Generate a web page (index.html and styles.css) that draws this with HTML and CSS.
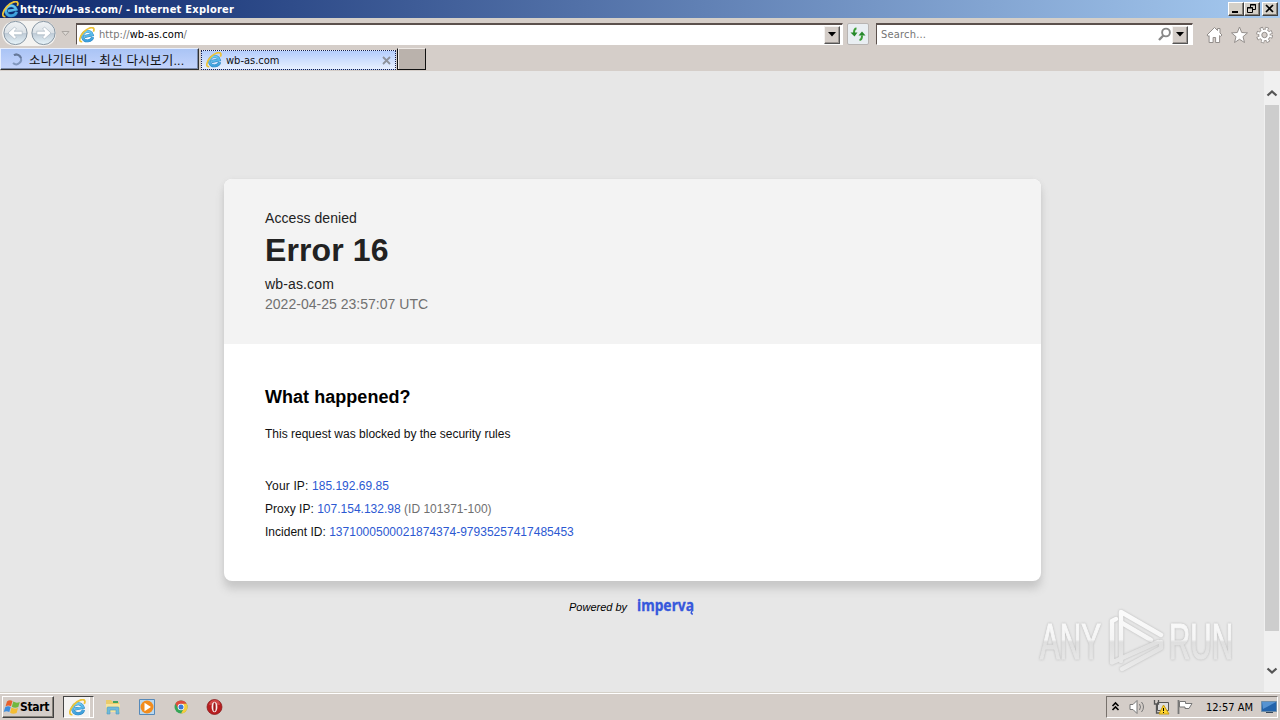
FILE: index.html
```html
<!DOCTYPE html>
<html lang="en">
<head>
<meta charset="utf-8">
<title>wb-as.com</title>
<link rel="stylesheet" href="styles.css">
</head>
<body>
<svg class="defs" width="0" height="0">
  <defs>
    <linearGradient id="blue" x1="0" y1="0" x2="0" y2="1"><stop offset="0" stop-color="#6ccbf3"/><stop offset="1" stop-color="#3c9edb"/></linearGradient>
    <linearGradient id="orb" x1="0" y1="0" x2="0" y2="1"><stop offset="0" stop-color="#f1f3f5"/><stop offset=".48" stop-color="#dce2e7"/><stop offset=".52" stop-color="#bfcbd6"/><stop offset="1" stop-color="#e8f5fb"/></linearGradient>
    <linearGradient id="wm" gradientUnits="userSpaceOnUse" x1="0" y1="612" x2="0" y2="672"><stop offset="0" stop-color="#fbfbfb"/><stop offset=".46" stop-color="#f5f5f5"/><stop offset=".5" stop-color="#dfdfdf"/><stop offset="1" stop-color="#ececec"/></linearGradient>
    <symbol id="ie" viewBox="0 0 16 16">
      <g transform="rotate(-12 8 9)" fill="none">
        <path d="M13.300 11.300C11.500 15 4.200 15.300 3.500 9.500 3 3.300 12.800 2.600 13.400 9H5.500" stroke="#2b83bd" stroke-width="2.900"/>
        <path d="M13.300 11.300C11.500 15 4.200 15.300 3.500 9.500 3 3.300 12.800 2.600 13.400 9H5.500" stroke="url(#blue)" stroke-width="2.100"/>
      </g>
      <path d="M3.200 14.700C-.8 15.200.5 9.600 4.600 5.200 8.500 1 13.600-.6 14.700 1.500 15.200 2.500 15 3.500 14.300 4.600" fill="none" stroke="#edc337" stroke-width="1.700"/>
    </symbol>
  </defs>
</svg>
<div class="screen">
  <header class="titlebar">
    <svg class="title-icon" width="17" height="17"><use href="#ie"/></svg>
    <span class="title-text">http://wb-as.com/ - Internet Explorer</span>
    <div class="window-buttons">
      <span class="win-btn"><svg width="14" height="12"><path d="M3 9h6" stroke="#000" stroke-width="2"/></svg></span>
      <span class="win-btn"><svg width="14" height="12"><path d="M5.500 4V1.500h5v5H8M5 2h6" fill="none" stroke="#000"/><path d="M2.500 4.500h5v5h-5zM2 5h6" fill="none" stroke="#000"/></svg></span>
      <span class="win-btn close"><svg width="14" height="12"><path d="M3 2l7 7M10 2L3 9" stroke="#000" stroke-width="1.700"/></svg></span>
    </div>
  </header>

  <nav class="toolbar">
    <svg class="history" width="76" height="28">
      <path d="M15 2H43Q55 3 56 15 55 27 43 27H15Q3 26 2 14 3 3 15 2" fill="#f4f3f1"/>
      <circle cx="15.500" cy="14" r="11.600" fill="url(#orb)" stroke="#8796a3"/>
      <circle cx="43.500" cy="14" r="11.600" fill="url(#orb)" stroke="#8796a3"/>
      <path d="M8 14l6.500-6 2 2-2.300 2.200h8v3.600h-8l2.300 2.200-2 2z" fill="#fff" stroke="#aab7c3" stroke-width=".7"/>
      <path d="M51 14l-6.500-6-2 2 2.300 2.200h-8v3.600h8l-2.300 2.200 2 2z" fill="#fff" stroke="#aab7c3" stroke-width=".7"/>
      <path d="M62 12.500h7l-3.500 4z" fill="#dedad6" stroke="#aaa5a1"/>
    </svg>
    <div class="field address">
      <svg width="16" height="16"><use href="#ie"/></svg>
      <span class="url"><span class="muted">http://</span>wb-as.com<span class="muted">/</span></span>
      <span class="drop"><svg width="9" height="5"><path d="M0 0h8L4 4.500z"/></svg></span>
    </div>
    <span class="refresh"><svg width="16" height="15"><path d="M6.500 1.500C4 1.500 4 3.500 4 6M9.500 13c2.500-.3 2.500-2 2.500-4.500" fill="none" stroke="#3a9d35" stroke-width="2"/><path d="M.5 5.500h7L4.500 9.500zM8.500 8.500h7L12 4.500z" fill="#26882b"/></svg></span>
    <div class="field search">
      <span class="placeholder">Search...</span>
      <svg class="lens" width="15" height="16"><circle cx="9" cy="5.500" r="3.900" fill="none" stroke="#888" stroke-width="1.900"/><path d="M6.300 8.500L2 13" stroke="#888" stroke-width="2.400"/></svg>
      <span class="drop"><svg width="9" height="5"><path d="M0 0h8L4 4.500z"/></svg></span>
    </div>
    <div class="commands">
      <svg width="17" height="18"><path d="M1 9L8.500 1.500 11.500 4.500V2.500h2.500v4.500l2 2-1.400 1.400-1-.8V16.500h-4v-5h-2.500v5h-4V9.600l-1 .8z" fill="#fff" stroke="#938e8b"/></svg>
      <svg width="17" height="18"><path d="M8.500 1l2.200 5.500 5.800.4-4.500 3.800 1.500 5.800-5-3.200-5 3.200L5 10.700.5 6.900l5.800-.4z" fill="#fff" stroke="#938e8b"/></svg>
      <svg width="17" height="18"><circle cx="8.500" cy="9" r="6.500" fill="none" stroke="#938e8b" stroke-width="3.800" stroke-dasharray="3 2.105"/><circle cx="8.500" cy="9" r="5.800" fill="#fff" stroke="#938e8b"/><circle cx="8.500" cy="9" r="6.200" fill="none" stroke="#fff" stroke-width="2.600" stroke-dasharray="1.900 2.970" stroke-dashoffset="-.5"/><circle cx="8.500" cy="9" r="2.700" fill="#d5cec9" stroke="#938e8b"/></svg>
    </div>
  </nav>

  <div class="tabs">
    <div class="tab inactive">
      <svg width="13" height="13"><path d="M4 2.200A4.800 4.800 0 1 1 3 10" fill="none" stroke="#8096bd" stroke-width="2"/><path d="M4 2.200A4.800 4.800 0 0 1 11 5" fill="none" stroke="#667899" stroke-width="2"/></svg>
      <span class="korean">소나기티비 - 최신 다시보기...</span>
    </div>
    <div class="tab active">
      <svg width="16" height="16"><use href="#ie"/></svg>
      <span class="tab-name">wb-as.com</span>
      <svg class="tab-close" width="9" height="9"><path d="M1 1l7 7M8 1L1 8" stroke="#8d929c" stroke-width="1.800"/></svg>
    </div>
    <div class="new-tab"></div>
  </div>

  <main class="viewport">
    <div class="page">
      <section class="card">
        <div class="card-head">
          <p class="denied">Access denied</p>
          <h1>Error 16</h1>
          <p class="domain">wb-as.com</p>
          <p class="time">2022-04-25 23:57:07 UTC</p>
        </div>
        <div class="card-body">
          <h2>What happened?</h2>
          <p class="reason">This request was blocked by the security rules</p>
          <p class="row"><span class="your-ip">Your IP: </span><span class="value">185.192.69.85</span></p>
          <p class="row">Proxy IP: <span class="value">107.154.132.98</span> <span class="id">(ID 101371-100)</span></p>
          <p class="row">Incident ID: <span class="value">1371000500021874374-97935257417485453</span></p>
        </div>
      </section>
      <footer class="powered"><em>Powered by</em>
        <svg width="60" height="20"><text x="0" y="13" textLength="57" lengthAdjust="spacingAndGlyphs" class="brand">imperva</text><path d="M55 13q-2 3 1 3" fill="none" stroke="#3658dc" stroke-width="1.500"/></svg>
      </footer>
      <svg class="watermark" width="210" height="74" viewBox="1030 603 210 74">
        <g fill="url(#wm)" stroke="url(#wm)" stroke-width="1.200" class="wm-text">
          <text x="1040" y="659" textLength="61" lengthAdjust="spacingAndGlyphs">ANY</text>
          <text x="1169" y="659" textLength="64" lengthAdjust="spacingAndGlyphs">RUN</text>
        </g>
        <g fill="none" stroke="url(#wm)" stroke-width="4.500" stroke-linecap="round" stroke-linejoin="round" class="wm-mark">
          <path d="M1116 619L1112 621V662.500L1158 642"/>
          <path d="M1121 661V612L1161 635"/>
          <path d="M1122 623L1151 640"/>
          <path d="M1122 669L1161 648V642"/>
        </g>
      </svg>
    </div>
    <aside class="scrollbar">
      <svg width="16" height="12"><path d="M3.500 8.500L8 4.500l4.500 4" fill="none" stroke="#555" stroke-width="2.300"/></svg>
      <div class="thumb"></div>
      <svg class="down" width="16" height="12"><path d="M3.500 3.500L8 7.500l4.500-4" fill="none" stroke="#555" stroke-width="2.300"/></svg>
    </aside>
  </main>

  <footer class="taskbar">
    <div class="start"><svg width="17" height="16"><path d="M3 2.500q2.500-2 5.500-.5L7 7.200q-3-1.500-5.500.3z" fill="#e8602c"/><path d="M9.300 2.500q3 2 6.500.5L14.300 8q-3.500 1.500-6.500-.3z" fill="#72b83f"/><path d="M1.200 8.300q2.500-2 5.500-.4L5.300 13Q2.500 11.300-.3 13z" fill="#3d8dde"/><path d="M7.500 8.600q3 2 6.500.4L12.600 14q-3.500 1.700-6.500-.2z" fill="#f4bd34"/></svg><span>Start</span></div>
    <div class="task pressed"><svg width="17" height="17"><use href="#ie"/></svg></div>
    <div class="launchers">
      <svg width="18" height="18"><path d="M2 5V2h5l2 2h6v9H2z" fill="#eacb6b"/><path d="M2 6h14v8H2z" fill="#f6e49d"/><path d="M3 16v-6q0-1 1-1h10q1 0 1 1v6h-3v-4H6v4z" fill="#70b9da" stroke="#4e9cc0" stroke-width=".6"/><path d="M9 4h5" stroke="#42a35e" stroke-width="2"/></svg>
      <svg width="18" height="18"><path d="M1.500 1.500h15v15h-15z" fill="#b9d8f0" stroke="#5689b9"/><circle cx="9" cy="9" r="6.500" fill="#f28c1d"/><path d="M6.500 4.700v8.600L13 9z" fill="#fff"/></svg>
      <svg width="18" height="18" viewBox="0 0 18 18"><circle cx="9" cy="9" r="6.500" fill="#35a557"/><path d="M3.370 5.750A6.500 6.500 0 0 1 14.630 5.750L9 6.500 6.300 10.500z" fill="#de4b3c"/><path d="M14.630 5.750A6.500 6.500 0 0 1 9 15.500L11.800 10.500 10 5.750z" fill="#f6cc3e"/><circle cx="9" cy="9" r="3.300" fill="#fff"/><circle cx="9" cy="9" r="2.500" fill="#3979d7"/></svg>
      <svg width="18" height="18"><circle cx="8.500" cy="9" r="7.500" fill="#b81e20" stroke="#831416" stroke-width=".7"/><path d="M3 7q1-5 6-5t5 5" fill="#df6464" opacity=".6"/><ellipse cx="8.500" cy="9" rx="2.900" ry="5.300" fill="#f9eeee"/><ellipse cx="8.500" cy="9" rx="1.200" ry="4.500" fill="#9e1719"/></svg>
    </div>
    <div class="tray">
      <svg class="chevrons" width="9" height="12"><path d="M1.500 5L4.500 2l3 3M1.500 9l3-3 3 3" fill="none" stroke="#000" stroke-width="1.600"/></svg>
      <svg class="speaker" width="17" height="16"><path d="M1 5.500h3L8 1.500v13L4 10.500H1z" fill="#fff" stroke="#777"/><path d="M10.500 5q2 3 0 6M12.500 3q4 5 0 10" fill="none" stroke="#777"/></svg>
      <svg class="network" width="17" height="16"><path d="M4.500 3.500h11v8h-11z" fill="#ddd" stroke="#555"/><path d="M1.500 1v4h4V1M3.500 5v9h5" fill="none" stroke="#555" stroke-width="1.300"/><path d="M10.500 6l5.500 9H6z" fill="#ffd52e" stroke="#c69b10"/><path d="M10.500 9v3m0 1v1" stroke="#000"/></svg>
      <svg class="flag" width="17" height="16"><path d="M1.500 1v14" stroke="#777" stroke-width="1.800"/><path d="M2.500 2.500h6v2h6.500l-3 5H8V8H2.500z" fill="#fff" stroke="#777"/></svg>
      <span class="clock">12:57 AM</span>
      <svg class="desktop" width="16" height="14"><path d="M.5 1.500h15v10H.5z" fill="#2464ab" stroke="#6f8ea9"/><path d="M1 2h14L2 9z" fill="#5794d2"/><path d="M5 12.500h7" stroke="#34475b"/></svg>
    </div>
  </footer>
</div>
</body>
</html>
```

FILE: styles.css
```css
* { box-sizing: border-box; }
body { margin: 0; overflow: hidden; background: #d5cec9; }
p, h1, h2 { margin: 0; }
svg { display: block; flex: none; overflow: visible; }
.defs { position: absolute; }
.screen { width: 1280px; height: 720px; display: flex; flex-direction: column; font: 11px "DejaVu Sans Condensed", "DejaVu Sans", sans-serif; white-space: nowrap; }

.titlebar { height: 18px; flex: none; display: flex; align-items: center; padding: 0 2px; background: linear-gradient(90deg, #0c276c, #a6caf0); color: #fff; }
.title-icon { margin-right: 1px; }
.title-text { font-weight: bold; font-size: 11px; letter-spacing: .25px; }
.window-buttons { margin-left: auto; display: flex; }
.win-btn { width: 16px; height: 14px; background: #d4d0c8; border: 1px solid; border-color: #fff #404040 #404040 #fff; box-shadow: inset -1px -1px #858179; }
.close { margin-left: 2px; }

.toolbar { height: 30px; flex: none; display: flex; align-items: flex-start; padding-top: 4px; background: #d5cec9; border-top: 1px solid #d4d0c8; }
.history { margin-top: -4px; }
.field { height: 22px; background: #fff; border: 1px solid; border-color: #5c514d #fff #fff #5c514d; border-top-width: 2px; display: flex; align-items: center; }
.address { width: 767px; padding: 0 2px; }
.url { margin-left: 4px; font-size: 11px; letter-spacing: .05px; }
.muted { color: #777; }
.drop { width: 16px; height: 18px; margin-left: auto; background: #d4cdc8; border: 1px solid; border-color: #f4f2f0 #555 #555 #f4f2f0; box-shadow: inset -1px -1px #9c9692; display: flex; align-items: center; justify-content: center; }
.drop svg { margin-left: 1px; }
.refresh { margin-left: 4px; width: 22px; height: 22px; border: 1px solid #b8b4b2; border-radius: 2px; background: #e9eef2; display: flex; align-items: center; justify-content: center; }
.search { margin-left: 7px; width: 317px; padding: 0 4px; }
.placeholder { color: #757575; font-size: 11px; letter-spacing: .2px; }
.lens { margin-left: auto; }
.search .drop { margin-left: 0; }
.commands { display: flex; gap: 8px; margin: 3px 0 0 13px; }

.tabs { height: 23px; flex: none; display: flex; background: #d5cec9; }
.tab { height: 22px; display: flex; align-items: center; color: #111; }
.inactive { width: 199px; padding-left: 9px; background: linear-gradient(#aac4f5, #c4d4fc); border: 1px solid; border-color: #e7effe #303030 #303030 #e7effe; box-shadow: inset -1px -1px #7989aa; }
.korean { margin-left: 6px; font: 12.500px "Liberation Sans", "Noto Sans CJK KR", sans-serif; letter-spacing: .22px; }
.active { margin: 2px 0 0 2px; width: 195px; height: 20px; padding: 0 4px; background: linear-gradient(#b4cdfc, #e7effe); border: 1px dotted #17204a; }
.tab-name { margin-left: 4px; font-size: 11px; }
.tab-close { margin-left: auto; }
.new-tab { margin-left: 1px; width: 29px; height: 22px; background: #bab2ac; border: 1px solid; border-color: #eee9e5 #111 #111 #111; box-shadow: inset 1px 0 #eee9e5; }

.viewport { height: 621px; flex: none; display: flex; background: #e7e7e7; font-family: "Liberation Sans", sans-serif; }
.page { width: 1264px; position: relative; display: flex; flex-direction: column; padding: 108px 223px 0 224px; }
.card { height: 402px; border-radius: 8px; overflow: hidden; background: #fff; box-shadow: 0 8px 8px #c8c8c8, 0 1px 5px #d8d8d8; }
.card-head { height: 165px; background: #f3f3f3; padding: 29px 41px 0; color: #222; font-size: 14px; }
.denied, .domain, .time { line-height: 20px; }
.denied { letter-spacing: .07px; }
.domain { margin-top: 5px; letter-spacing: .14px; }
.time { color: #707070; letter-spacing: .02px; }
h1 { font-size: 32px; line-height: 38px; margin-top: 3px; letter-spacing: .1px; }
.card-body { padding: 41px 41px 0; color: #111; font-size: 12px; }
h2 { color: #000; font-size: 18px; line-height: 25px; letter-spacing: .04px; }
.reason { line-height: 20px; margin: 14px 0 31px; }
.row { line-height: 23px; letter-spacing: .01px; }
.your-ip { letter-spacing: .16px; }
.value { color: #2c59d2; }
.id { color: #707070; }
.powered { display: flex; margin: 14px 0 0 345px; }
.powered em { width: 68px; line-height: 24px; font-size: 11px; color: #000; }
.powered svg { margin-top: 3px; }
.brand { font: bold 16px "Noto Sans", sans-serif; fill: #3658dc; stroke: #3658dc; stroke-width: .3px; }
.watermark { position: absolute; left: 1030px; top: 532px; }
.wm-text { font: 50px "Liberation Sans Narrow", "Liberation Sans", sans-serif; filter: drop-shadow(0 0 1px #b5b5b5); }
.wm-mark { filter: drop-shadow(0 0 1px #b5b5b5); }
.scrollbar { width: 16px; background: #f0f0f0; padding-top: 16px; }
.thumb { margin: 6px 1px 0; height: 526px; background: #cdcdcd; }
.down { margin-top: 34px; }

.taskbar { height: 28px; flex: none; display: flex; align-items: flex-start; padding: 3px 2px 0; background: #d4cdc8; border-top: 1px solid #d4d0c8; box-shadow: inset 0 1px #fff; }
.start { width: 52px; height: 22px; display: flex; align-items: center; padding-left: 1px; border: 1px solid; border-color: #fff #404040 #404040 #fff; box-shadow: inset -1px -1px #858179; color: #000; font-weight: bold; font-size: 12px; }
.start span { letter-spacing: -.3px; margin-left: -1px; }
.task { margin-left: 9px; width: 31px; height: 22px; display: flex; align-items: center; padding-left: 5px; background: #f4f3f2; border: 1px solid; border-color: #444 #fff #fff #444; box-shadow: inset -3px 0 #d4cdc8, inset -4px 0 #fff; }
.launchers { display: flex; gap: 16px; margin: 2px 0 0 10px; }
.tray { width: 172px; height: 22px; margin-left: auto; display: flex; align-items: center; padding-left: 4px; border: 1px solid; border-color: #77716c #fff #fff #77716c; color: #000; }
.speaker { margin-left: 9px; }
.network { margin-left: 7px; }
.flag { margin-left: 7px; }
.clock { margin-left: 12px; font-size: 11px; letter-spacing: 0; }
.desktop { margin-left: auto; }
```
